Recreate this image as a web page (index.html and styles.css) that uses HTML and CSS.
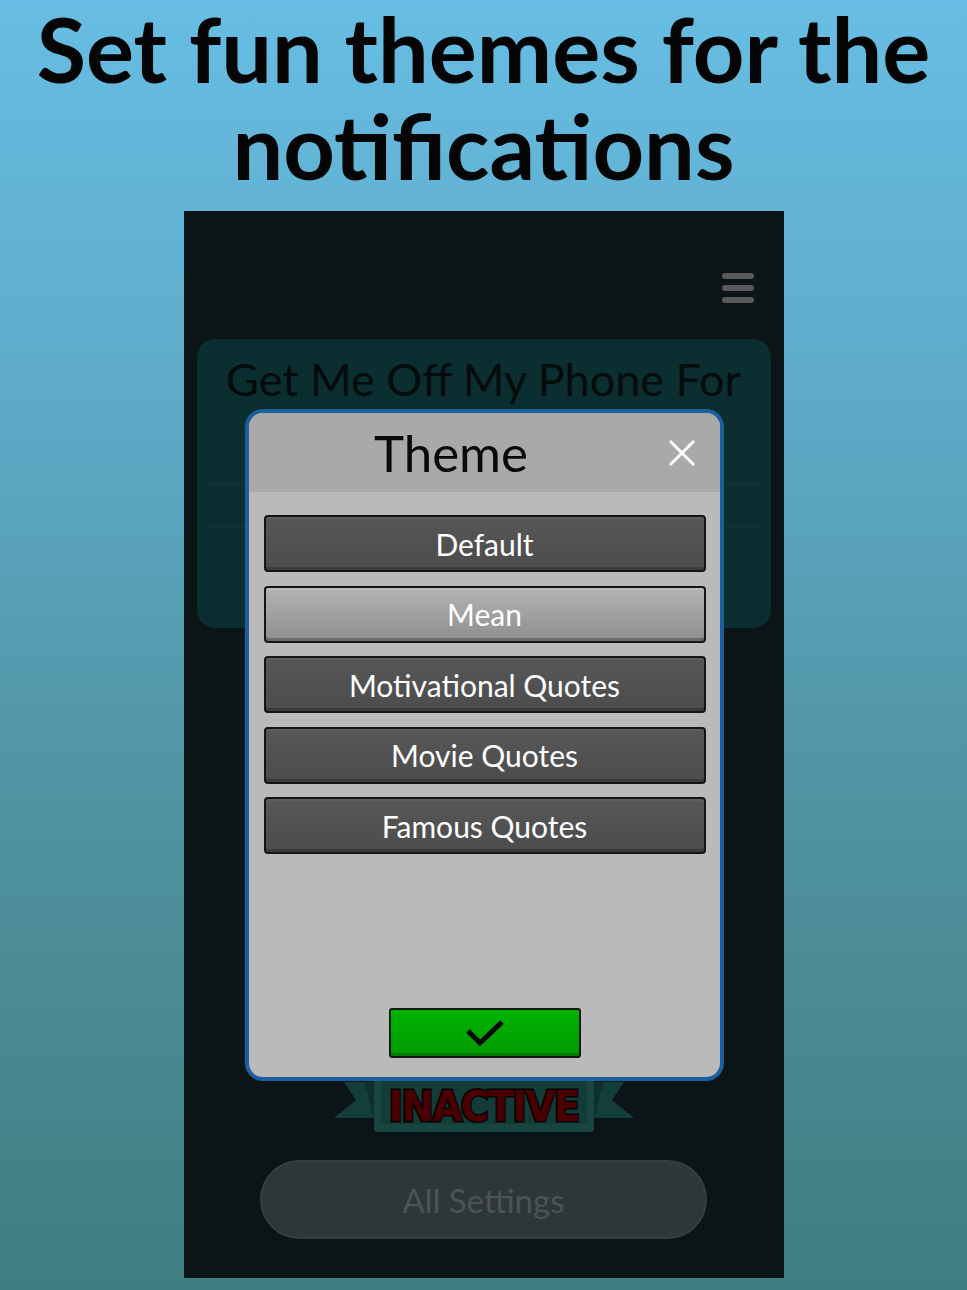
FILE: index.html
```html
<!DOCTYPE html>
<html>
<head>
<meta charset="utf-8">
<link rel="stylesheet" href="styles.css">
</head>
<body>
<h1 class="headline">Set fun themes for the notifications</h1>
<div class="phone">
  <div class="topbar">
    <div class="hamburger"><span></span><span></span><span></span></div>
  </div>
  <div class="card">
    <div class="card-title">Get Me Off My Phone For</div>
    <div class="card-row row-first"></div>
    <div class="card-row"></div>
  </div>
  <div class="ribbon">
    <svg class="ribbon-art" width="300" height="60" viewBox="0 0 300 60">
      <polygon points="10,6 50,6 50,42 0,42 22,24" fill="#143e3b"/>
      <polygon points="290,6 250,6 250,42 300,42 278,24" fill="#143e3b"/>
      <polygon points="30,6 50,6 50,42 40,42" fill="#0f302e"/>
      <polygon points="270,6 250,6 250,42 260,42" fill="#0f302e"/>
      <rect x="40" y="0" width="220" height="56" rx="3" fill="#174641"/>
      <rect x="47" y="0" width="206" height="48" fill="#133c39"/>
    </svg>
    <span class="ribbon-text">INACTIVE</span>
  </div>
  <div class="settings-btn">All Settings</div>

  <div class="modal">
    <div class="modal-head">
      <div class="modal-title">Theme</div>
      <div class="modal-close">
        <svg width="28" height="28" viewBox="0 0 28 28"><path d="M2 2 L26 26 M26 2 L2 26" stroke="#ffffff" stroke-width="3" stroke-linecap="butt"/></svg>
      </div>
    </div>
    <div class="modal-body">
      <div class="theme-btn">Default</div>
      <div class="theme-btn selected">Mean</div>
      <div class="theme-btn">Motivational Quotes</div>
      <div class="theme-btn">Movie Quotes</div>
      <div class="theme-btn">Famous Quotes</div>
      <div class="ok-btn">
        <svg width="40" height="30" viewBox="0 0 40 30"><path d="M3 13 L15 25 L37 4" fill="none" stroke="#0a0a0a" stroke-width="5"/></svg>
      </div>
    </div>
  </div>
</div>
</body>
</html>
```

FILE: styles.css
```css
html, body {
  margin: 0;
  padding: 0;
}
body {
  width: 967px;
  height: 1290px;
  overflow: hidden;
  background: linear-gradient(180deg, #67bde3 0%, #5eabc9 30%, #4f919e 65%, #3f7e80 100%);
  font-family: Lato, "Noto Sans", sans-serif;
}
.headline {
  margin: 0;
  padding-top: 0;
  text-align: center;
  font-family: Lato, "Noto Sans", sans-serif;
  font-weight: 700;
  font-size: 90px;
  line-height: 97px;
  color: #050505;
}
.phone {
  position: relative;
  width: 600px;
  height: 1067px;
  margin: 17px auto 0 auto;
  background: #0b1416;
  display: flex;
  flex-direction: column;
  align-items: center;
}
.topbar {
  align-self: stretch;
  height: 128px;
  display: flex;
  justify-content: flex-end;
  padding: 62px 30px 0 0;
  box-sizing: border-box;
}
.hamburger {
  display: flex;
  flex-direction: column;
  gap: 6px;
}
.hamburger span {
  display: block;
  width: 32px;
  height: 6px;
  border-radius: 3px;
  background: #595959;
}
.card {
  align-self: stretch;
  margin: 0 13px;
  height: 289px;
  border-radius: 18px;
  background: #0b2e30;
  box-sizing: border-box;
  padding: 12px 12px 0 12px;
}
.card-title {
  text-align: center;
  font-size: 45px;
  line-height: 56px;
  color: #040b0b;
}
.card-row {
  height: 42px;
  border-bottom: 1px solid #0f3b3c;
}
.card-row.row-first {
  height: 76px;
}
.ribbon {
  position: relative;
  width: 300px;
  height: 60px;
  margin-top: 448px;
  display: flex;
  justify-content: center;
  align-items: center;
}
.ribbon-art {
  position: absolute;
  left: 0;
  top: 0;
}
.ribbon-text {
  position: relative;
  font-family: "DejaVu Sans", sans-serif;
  font-stretch: condensed;
  font-weight: 700;
  font-size: 43px;
  letter-spacing: -1.5px;
  color: #4a0000;
  -webkit-text-stroke: 3px #050505;
  paint-order: stroke fill;
}
.settings-btn {
  margin-top: 24px;
  width: 447px;
  height: 79px;
  box-sizing: border-box;
  border-radius: 40px;
  background: #2f3638;
  border: 2px solid #363e40;
  color: #4b5355;
  font-size: 33px;
  display: flex;
  align-items: center;
  justify-content: center;
}
.modal {
  position: absolute;
  left: 61px;
  top: 198px;
  width: 479px;
  height: 672px;
  box-sizing: border-box;
  border: 4px solid #1c5f9f;
  border-radius: 18px;
  background: #bababa;
  overflow: hidden;
  display: flex;
  flex-direction: column;
}
.modal-head {
  height: 79px;
  background: #a9a9a9;
  display: flex;
  align-items: center;
}
.modal-title {
  flex: 1;
  text-align: center;
  font-size: 51px;
  color: #0a0a0a;
}
.modal-close {
  width: 56px;
  margin-right: 10px;
  display: flex;
  justify-content: center;
  align-items: center;
}
.modal-body {
  flex: 1;
  display: flex;
  flex-direction: column;
  padding: 23px 14px 19px 15px;
  gap: 13.5px;
}
.theme-btn {
  height: 57px;
  box-sizing: border-box;
  border: 2px solid #151515;
  border-radius: 4px;
  background: linear-gradient(180deg, #575757 0%, #4c4c4c 100%);
  box-shadow: inset 0 2px 0 #5f5f5f, inset 0 -3px 0 #3b3b3b;
  color: #ffffff;
  font-size: 30px;
  display: flex;
  align-items: center;
  justify-content: center;
}
.theme-btn.selected {
  background: linear-gradient(180deg, #b3b3b3 0%, #8e8e8e 100%);
  box-shadow: inset 0 2px 0 #bcbcbc, inset 0 -3px 0 #6c6c6c;
}
.ok-btn {
  margin-top: auto;
  align-self: center;
  width: 192px;
  height: 50px;
  box-sizing: border-box;
  border: 2px solid #111a11;
  border-radius: 3px;
  background: linear-gradient(180deg, #00b300 0%, #009a00 100%);
  box-shadow: inset 0 -3px 0 #007c00;
  display: flex;
  align-items: center;
  justify-content: center;
}
```
